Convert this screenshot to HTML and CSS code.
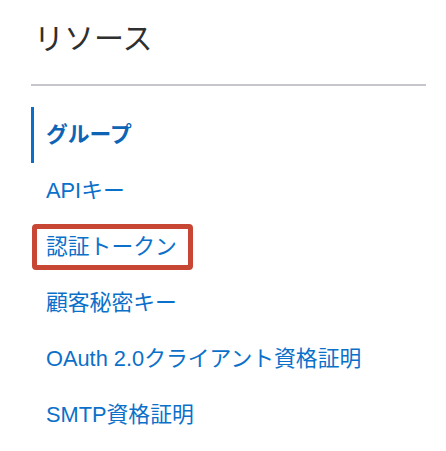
FILE: index.html
```html
<!DOCTYPE html>
<html lang="ja">
<head>
<meta charset="utf-8">
<title>リソース</title>
<link rel="stylesheet" href="styles.css">
</head>
<body>
<aside class="panel">
  <h2 class="panel-title">リソース</h2>
  <hr class="divider">
  <nav class="res-nav">
    <a class="res-item is-active" href="#">グループ</a>
    <a class="res-item" href="#">APIキー</a>
    <a class="res-item" href="#"><span class="highlight">認証トークン</span></a>
    <a class="res-item" href="#">顧客秘密キー</a>
    <a class="res-item" href="#">OAuth 2.0クライアント資格証明</a>
    <a class="res-item" href="#">SMTP資格証明</a>
  </nav>
</aside>
</body>
</html>
```

FILE: styles.css
```css
html, body {
  margin: 0;
  padding: 0;
  background: #ffffff;
}

body {
  font-family: "Liberation Sans", "Noto Sans CJK JP", sans-serif;
  color: #2e2e2e;
}

.panel {
  padding: 19px 20px 0 31px;
}

.panel-title {
  margin: 0;
  padding-left: 3px;
  font-size: 30px;
  line-height: 40px;
  font-weight: normal;
  color: #2f2f2f;
}

.divider {
  margin: 25px 0 21px 0;
  border: 0;
  height: 2px;
  background: #c6c7cc;
}

.res-nav {
  display: flex;
  flex-direction: column;
}

.res-item {
  display: flex;
  align-items: center;
  height: 56px;
  padding-left: 12px;
  font-size: 21.8px;
  line-height: 22px;
  color: #0b70c9;
  text-decoration: none;
  border-left: 3px solid transparent;
}

.res-item.is-active {
  border-left-color: #0b6fc8;
  font-weight: bold;
  color: #0d64b4;
}

.highlight {
  position: relative;
  display: inline-block;
}

.highlight::after {
  content: "";
  position: absolute;
  left: -14px;
  right: -16px;
  top: -12px;
  bottom: -12px;
  border: 5px solid #c74634;
  border-radius: 4px;
}
```
